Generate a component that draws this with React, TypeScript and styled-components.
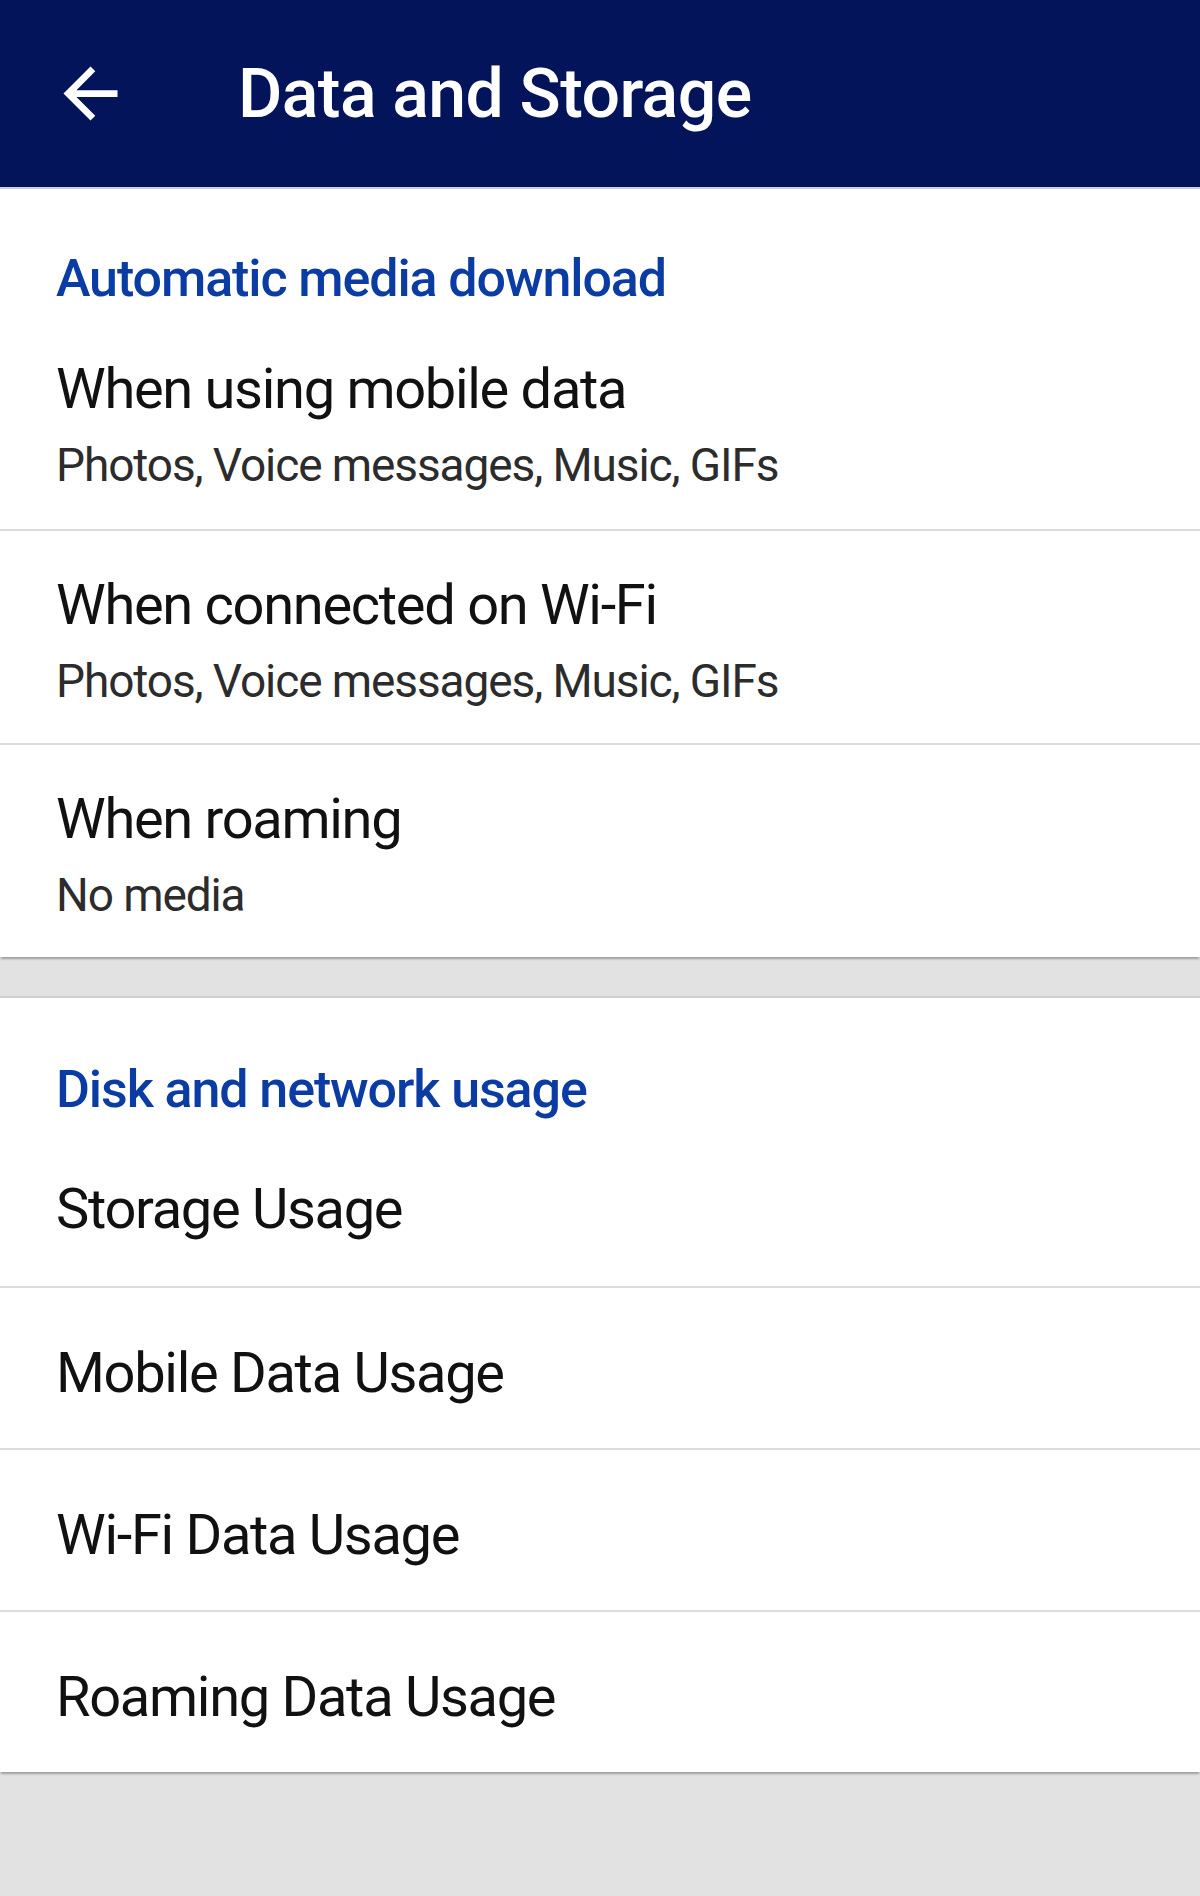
import styled, { createGlobalStyle } from "styled-components";

const GlobalStyle = createGlobalStyle`
  html, body {
    margin: 0;
    padding: 0;
    background: #e2e2e2;
  }
  body {
    font-family: Roboto, "Noto Sans", "Liberation Sans", sans-serif;
    -webkit-font-smoothing: antialiased;
  }
`;

const Screen = styled.div`
  width: 1200px;
  min-height: 1896px;
  background: #e2e2e2;
  display: flex;
  flex-direction: column;
`;

const TopBar = styled.header`
  height: 187px;
  background: #03145a;
  display: flex;
  align-items: center;
  box-shadow: 0 2px 0 #c9d0dc;
  position: relative;
  z-index: 1;
`;

const BackButton = styled.button`
  width: 81px;
  height: 81px;
  margin-left: 50px;
  padding: 0;
  border: none;
  background: transparent;
  display: flex;
  align-items: center;
  justify-content: center;
  cursor: pointer;
`;

const Title = styled.h1`
  margin: 0 0 0 107px;
  color: #ffffff;
  font-size: 68px;
  font-weight: 500;
  letter-spacing: -0.6px;
`;

const Card = styled.section<{ $gapAfter?: boolean }>`
  background: #ffffff;
  margin-bottom: ${(p) => (p.$gapAfter ? "41px" : "0")};
  box-shadow: ${(p) =>
    p.$gapAfter
      ? "0 3px 2px -1px rgba(0, 0, 0, 0.3)"
      : "0 3px 2px -1px rgba(0, 0, 0, 0.3), 0 -2px 0 #cfcfcf"};
`;

const SectionHeader = styled.h2<{ $height: number }>`
  margin: 0;
  height: ${(p) => p.$height}px;
  box-sizing: border-box;
  padding: 61px 56px 0;
  line-height: 61px;
  font-size: 52px;
  font-weight: 500;
  letter-spacing: -1.1px;
  color: #0b3ca4;
`;

const Row = styled.div<{ $twoLine?: boolean }>`
  display: flex;
  flex-direction: column;
  box-sizing: border-box;
  padding: ${(p) => (p.$twoLine ? "38px 56px 37px" : "10px 56px 0")};
  height: ${(p) => (p.$twoLine ? "214px" : "162px")};
  & + & {
    border-top: 2px solid #dcdcdc;
  }
`;

const RowTitle = styled.div<{ $twoLine?: boolean }>`
  font-size: 56px;
  line-height: ${(p) => (p.$twoLine ? "72px" : "150px")};
  letter-spacing: -1.3px;
  color: #111111;
`;

const RowSubtitle = styled.div`
  margin-top: 13px;
  font-size: 46px;
  line-height: 54px;
  letter-spacing: -1.1px;
  color: #2c2c2c;
`;

const ArrowBack = () => (
  <svg width="81" height="81" viewBox="0 0 24 24" fill="#ffffff">
    <path d="M20 11H7.83l5.59-5.59L12 4l-8 8 8 8 1.41-1.41L7.83 13H20v-2z" />
  </svg>
);

const mediaRows = [
  { title: "When using mobile data", sub: "Photos, Voice messages, Music, GIFs" },
  { title: "When connected on Wi-Fi", sub: "Photos, Voice messages, Music, GIFs" },
  { title: "When roaming", sub: "No media" },
];

const usageRows = [
  "Storage Usage",
  "Mobile Data Usage",
  "Wi-Fi Data Usage",
  "Roaming Data Usage",
];

export default function App() {
  return (
    <>
      <GlobalStyle />
      <Screen>
        <TopBar>
          <BackButton aria-label="Back">
            <ArrowBack />
          </BackButton>
          <Title>Data and Storage</Title>
        </TopBar>

        <Card $gapAfter>
          <SectionHeader $height={128}>Automatic media download</SectionHeader>
          {mediaRows.map((r) => (
            <Row $twoLine key={r.title}>
              <RowTitle $twoLine>{r.title}</RowTitle>
              <RowSubtitle>{r.sub}</RowSubtitle>
            </Row>
          ))}
        </Card>

        <Card>
          <SectionHeader $height={126}>Disk and network usage</SectionHeader>
          {usageRows.map((t) => (
            <Row key={t}>
              <RowTitle>{t}</RowTitle>
            </Row>
          ))}
        </Card>
      </Screen>
    </>
  );
}
